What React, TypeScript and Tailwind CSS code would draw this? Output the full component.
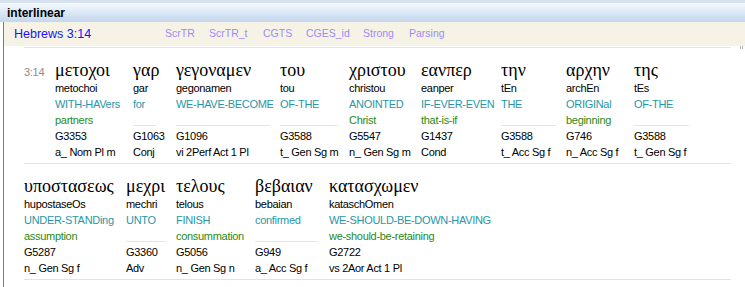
import React from 'react';

type Word = {
  gk: string;
  tr: string;
  gloss: string;
  alt?: string;
  num: string;
  parse: string;
  w: string;
  lw?: string;
};

const row1: Word[] = [
  { gk: 'μετοχοι', tr: 'metochoi', gloss: 'WITH-HAVers', alt: 'partners', num: 'G3353', parse: 'a_ Nom Pl m', w: 'w-[78px]' },
  { gk: 'γαρ', tr: 'gar', gloss: 'for', num: 'G1063', parse: 'Conj', w: 'w-[43px]', lw: 'w-[23px]' },
  { gk: 'γεγοναμεν', tr: 'gegonamen', gloss: 'WE-HAVE-BECOME', num: 'G1096', parse: 'vi 2Perf Act 1 Pl', w: 'w-[104px]', lw: 'w-[94px]' },
  { gk: 'του', tr: 'tou', gloss: 'OF-THE', num: 'G3588', parse: 't_ Gen Sg m', w: 'w-[69px]', lw: 'w-[58px]' },
  { gk: 'χριστου', tr: 'christou', gloss: 'ANOINTED', alt: 'Christ', num: 'G5547', parse: 'n_ Gen Sg m', w: 'w-[72px]' },
  { gk: 'εανπερ', tr: 'eanper', gloss: 'IF-EVER-EVEN', alt: 'that-is-if', num: 'G1437', parse: 'Cond', w: 'w-[80px]' },
  { gk: 'την', tr: 'tEn', gloss: 'THE', num: 'G3588', parse: 't_ Acc Sg f', w: 'w-[65px]', lw: 'w-[55px]' },
  { gk: 'αρχην', tr: 'archEn', gloss: 'ORIGINal', alt: 'beginning', num: 'G746', parse: 'n_ Acc Sg f', w: 'w-[68px]' },
  { gk: 'της', tr: 'tEs', gloss: 'OF-THE', num: 'G3588', parse: 't_ Gen Sg f', w: 'w-[70px]', lw: 'w-[55px]' },
];

const row2: Word[] = [
  { gk: 'υποστασεως', tr: 'hupostaseOs', gloss: 'UNDER-STANDing', alt: 'assumption', num: 'G5287', parse: 'n_ Gen Sg f', w: 'w-[102px]' },
  { gk: 'μεχρι', tr: 'mechri', gloss: 'UNTO', num: 'G3360', parse: 'Adv', w: 'w-[50px]', lw: 'w-[40px]' },
  { gk: 'τελους', tr: 'telous', gloss: 'FINISH', alt: 'consummation', num: 'G5056', parse: 'n_ Gen Sg n', w: 'w-[79px]' },
  { gk: 'βεβαιαν', tr: 'bebaian', gloss: 'confirmed', num: 'G949', parse: 'a_ Acc Sg f', w: 'w-[74px]', lw: 'w-[63px]' },
  { gk: 'κατασχωμεν', tr: 'kataschOmen', gloss: 'WE-SHOULD-BE-DOWN-HAVING', alt: 'we-should-be-retaining', num: 'G2722', parse: 'vs 2Aor Act 1 Pl', w: 'w-[200px]' },
];

const links = [
  { label: 'ScrTR', w: 'w-[44px]' },
  { label: 'ScrTR_t', w: 'w-[54px]' },
  { label: 'CGTS', w: 'w-[43px]' },
  { label: 'CGES_id', w: 'w-[57px]' },
  { label: 'Strong', w: 'w-[46px]' },
  { label: 'Parsing', w: 'w-[60px]' },
];

const WordCol: React.FC<{ word: Word }> = ({ word }) => (
  <div className={`${word.w} shrink-0 flex flex-col whitespace-nowrap`}>
    <div className="h-[20px] leading-[20px] text-[18px] tracking-normal text-black font-['Liberation_Serif',serif]">{word.gk}</div>
    <div className="h-4 leading-4 text-black">{word.tr}</div>
    <div className="h-4 leading-4 text-[#2896a8]">{word.gloss}</div>
    {word.alt ? (
      <div className="h-4 leading-4 text-[#2a8a14]">{word.alt}</div>
    ) : (
      <div className="h-4 flex items-end pb-[2px]">
        <div className={`${word.lw} h-px bg-[#e3e8e3]`}></div>
      </div>
    )}
    <div className="h-4 leading-4 text-black">{word.num}</div>
    <div className="h-4 leading-4 text-black">{word.parse}</div>
  </div>
);

export default function App() {
  return (
    <div className="w-[745px] h-[287px] bg-white overflow-hidden relative font-['Liberation_Sans',Arial,sans-serif]">
      <div className="h-[3px] bg-[#d6e2ef]"></div>
      {/* title bar */}
      <div className="h-[19px] pl-[7px] pt-[1px] flex items-center bg-gradient-to-b from-[#f6f9fd] to-[#c3d7ed]">
        <span className="text-[12px] font-bold text-black">interlinear</span>
      </div>

      <div className="ml-[3px] border-l border-[#7c7c7c] h-[265px]">
        {/* reference toolbar */}
        <div className="h-[24px] bg-[#f7f2e6] flex items-center pl-[10px]">
          <span className="w-[151px] text-[12.5px] text-[#1414ff]">Hebrews 3:14</span>
          {links.map((l) => (
            <span key={l.label} className={`${l.w} text-[10.5px] text-[#9a8cf6]`}>{l.label}</span>
          ))}
        </div>

        <div className="mt-[1px] ml-[20px] w-[707px] border-t border-[#dfe2ee] text-[11px] tracking-[-0.3px]">
          <div className="flex pt-[12px] pb-[3px] border-b border-[#e0e0ee]">
            <div className="w-[31px] shrink-0 h-[20px] flex items-end leading-4 text-[#8a8a8a]">3:14</div>
            {row1.map((w, i) => (
              <WordCol key={i} word={w} />
            ))}
          </div>
          <div className="flex pt-[12px] pb-[3px] border-b border-[#e0e0ee]">
            {row2.map((w, i) => (
              <WordCol key={i} word={w} />
            ))}
          </div>
        </div>
      </div>

      {/* splitter grip */}
      <div className="absolute left-[740px] top-[46px] flex gap-[1px]">
        <div className="w-px h-[3px] bg-[#b8b8b8]"></div>
        <div className="w-px h-[3px] bg-[#b8b8b8]"></div>
      </div>
    </div>
  );
}
